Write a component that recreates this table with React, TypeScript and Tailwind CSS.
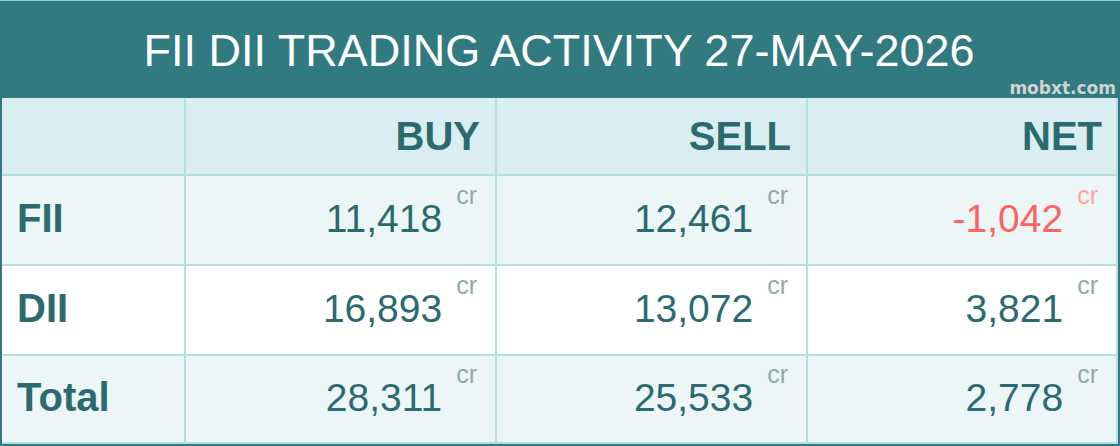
import React from "react";

const LINE = "border-[#b3dfe3]";

type Row = { label: string; buy: string; sell: string; net: string; neg?: boolean; bg: string; h: string };

const rows: Row[] = [
  { label: "FII", buy: "11,418", sell: "12,461", net: "-1,042", neg: true, bg: "bg-[#ecf6f7]", h: "h-[90px]" },
  { label: "DII", buy: "16,893", sell: "13,072", net: "3,821", bg: "bg-white", h: "h-[90px]" },
  { label: "Total", buy: "28,311", sell: "25,533", net: "2,778", bg: "bg-[#ecf6f7]", h: "h-[88px]" },
];

function Val({ v, neg }: { v: string; neg?: boolean }) {
  return (
    <div className="flex items-start pr-[18px]">
      <span className={`text-[39px] leading-none ${neg ? "text-[#ff6262]" : "text-[#2b6b70]"}`}>{v}</span>
      <span className={`ml-[14px] -mt-[16px] text-[25px] leading-none ${neg ? "text-[#ffa3a3]" : "text-[#8eaaac]"}`}>cr</span>
    </div>
  );
}

export default function App() {
  return (
    <div className="w-[1120px] h-[446px] overflow-hidden bg-white" style={{ fontFamily: '"Liberation Sans", Arial, sans-serif' }}>
      <div className="relative h-[98px] bg-[#317a80] border-t border-[#8fcfd5] flex items-center justify-center">
        <span className="text-white text-[45px] leading-none pt-[1px] pr-[2px]">FII DII TRADING ACTIVITY 27-MAY-2026</span>
        <span
          className="absolute right-[4px] bottom-[1px] text-[17px] font-bold text-[#d0d3d3] leading-none"
          style={{ fontFamily: '"DejaVu Sans", Verdana, sans-serif' }}
        >
          mobxt.com
        </span>
      </div>
      <div className="border-x-2 border-b-2 border-[#32797f]">
        <div className={`flex h-[78px] border-b-2 ${LINE} bg-[#daeef1] text-[40px] font-bold text-[#2b6b70]`}>
          <div className={`w-[184px] border-r-2 ${LINE}`} />
          <div className={`w-[311px] border-r-2 ${LINE} flex items-center justify-end pr-[15px]`}>BUY</div>
          <div className={`w-[311px] border-r-2 ${LINE} flex items-center justify-end pr-[15px]`}>SELL</div>
          <div className={`flex-1 border-r-2 ${LINE} flex items-center justify-end pr-[14px]`}>NET</div>
        </div>
        {rows.map((r) => (
          <div key={r.label} className={`flex ${r.h} border-b-2 ${LINE} ${r.bg}`}>
            <div className={`w-[184px] border-r-2 ${LINE} flex items-center pl-[15px] pb-[4px] text-[40px] font-bold text-[#2b6b70]`}>
              {r.label}
            </div>
            <div className={`w-[311px] border-r-2 ${LINE} flex items-center justify-end pb-[4px]`}>
              <Val v={r.buy} />
            </div>
            <div className={`w-[311px] border-r-2 ${LINE} flex items-center justify-end pb-[4px]`}>
              <Val v={r.sell} />
            </div>
            <div className={`flex-1 border-r-2 ${LINE} flex items-center justify-end pb-[4px]`}>
              <Val v={r.net} neg={r.neg} />
            </div>
          </div>
        ))}
      </div>
    </div>
  );
}
